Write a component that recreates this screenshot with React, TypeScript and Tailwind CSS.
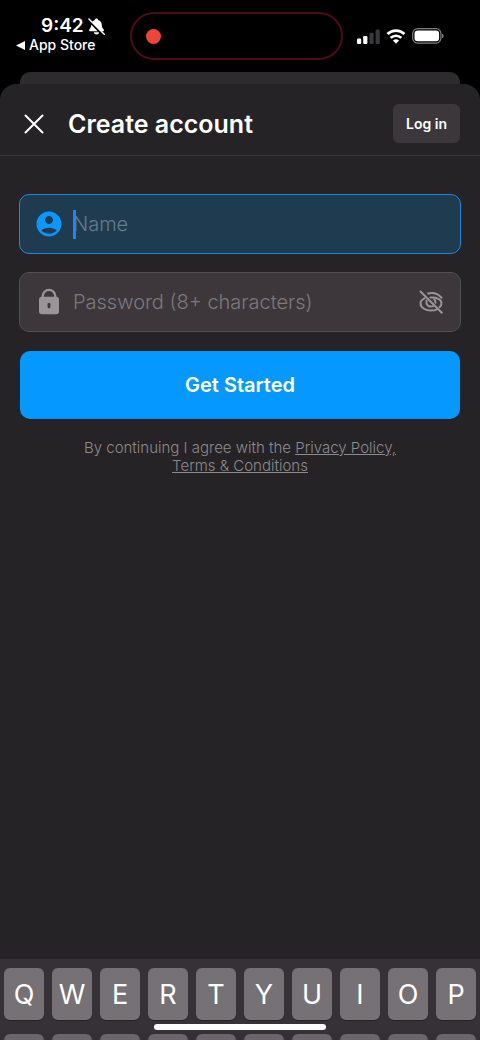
import React from "react";

const TOP_ROW = ["Q", "W", "E", "R", "T", "Y", "U", "I", "O", "P"];

function BellOffIcon() {
  return (
    <svg className="h-[17px] w-[17px]" viewBox="0 0 18 18" aria-hidden="true">
      <path d="M9 .6c.9 0 1.600.6 1.700 1.400 2.500.7 3.800 2.600 3.900 5.200.1 2.500.7 3.400 1.700 4.400.4.5.6.9.6 1.300 0 .6-.4 1.100-1.200 1.100H2.300c-.8 0-1.200-.5-1.200-1.100 0-.4.2-.8.6-1.300 1-1 1.600-1.900 1.700-4.400.1-2.600 1.400-4.500 3.900-5.200C7.400 1.200 8.100.6 9 .6z" fill="#fff" />
      <path d="M6.200 15h5.600c-.2 1.500-1.300 2.400-2.800 2.400S6.400 16.500 6.200 15z" fill="#fff" />
      <path d="M0 2.200 16.200 18.400" stroke="#000" strokeWidth="2.200" />
      <path d="M1 1 17.200 17.200" stroke="#fff" strokeWidth="1.500" strokeLinecap="round" />
    </svg>
  );
}

function SignalIcon() {
  return (
    <svg className="h-[15px] w-[23px]" viewBox="0 0 23 15" aria-hidden="true">
      <rect x="0" y="9.500" width="4.200" height="5.500" rx="1.200" fill="#fff" />
      <rect x="6.200" y="7" width="4.200" height="8" rx="1.200" fill="#fff" />
      <rect x="12.400" y="3.700" width="4.200" height="11.300" rx="1.200" fill="#38373a" />
      <rect x="18.600" y="0.500" width="4.200" height="14.500" rx="1.200" fill="#38373a" />
    </svg>
  );
}

function WifiIcon() {
  return (
    <svg className="h-[15px] w-5" viewBox="0 0 20 15" fill="none" stroke="#fff" strokeWidth="2.700" aria-hidden="true">
      <path d="M1.500 5.100a12.300 12.300 0 0 1 17 0" />
      <path d="M4.700 8.900a7.600 7.600 0 0 1 10.600 0" />
      <path d="M10 14.800 6.900 11.600a4.600 4.600 0 0 1 6.200 0z" fill="#fff" stroke="none" />
    </svg>
  );
}

function BatteryIcon() {
  return (
    <svg className="h-4 w-8" viewBox="0 0 32 16" aria-hidden="true">
      <rect x="0.700" y="0.700" width="28.200" height="14.400" rx="4.800" fill="none" stroke="#807f82" strokeWidth="1.200" />
      <rect x="2.500" y="2.500" width="24.600" height="10.800" rx="3.200" fill="#fff" />
      <path d="M30 5.500c1 .4 1.600 1.300 1.600 2.400S31 9.900 30 10.300z" fill="#807f82" />
    </svg>
  );
}

function PersonIcon() {
  return (
    <svg className="h-[30px] w-[30px]" viewBox="0 0 24 24" fill="#0a98ff" aria-hidden="true">
      <path d="M12 2C6.480 2 2 6.480 2 12s4.480 10 10 10 10-4.480 10-10S17.520 2 12 2zm0 3.600c1.770 0 3.200 1.430 3.200 3.200s-1.430 3.200-3.200 3.200-3.200-1.430-3.200-3.200 1.430-3.200 3.200-3.200zm0 14.100c-2.400 0-4.700-.9-6.200-2.500C7.400 15.700 9.600 15 12 15s4.600.7 6.200 2.200c-1.500 1.600-3.800 2.500-6.200 2.500z" />
    </svg>
  );
}

function LockIcon() {
  return (
    <svg className="h-[30px] w-[30px]" viewBox="0 0 30 30" aria-hidden="true">
      <path d="M8.700 12V9.200a6.300 6.300 0 0 1 12.600 0V12" fill="none" stroke="#989498" strokeWidth="2.400" />
      <rect x="5" y="9.800" width="20" height="17.500" rx="3" fill="#989498" />
      <rect x="13.600" y="16" width="2.800" height="5.200" rx="1.200" fill="#3d373b" />
    </svg>
  );
}

function EyeOffIcon() {
  return (
    <svg className="h-6 w-6" viewBox="0 0 24 24" fill="none" stroke="#989498" strokeWidth="2" strokeLinecap="round" aria-hidden="true">
      <path d="M9 3.400C14 2.400 19.500 4 22.600 7.800" />
      <path d="M5.500 8.300C3 9.500 1.500 11.300 1.500 13.200c0 4.300 5 7.400 10.500 7.400 2.200 0 4.300-.5 6-1.300" />
      <path d="M11.500 7.500c6-.4 11 1.900 11 5.700 0 1.500-.7 2.900-2 4" />
      <path d="M7.600 10.600c-.9 3.200 1 6 4.400 6 .9 0 1.700-.2 2.400-.6" />
      <path d="M15.200 9.200c.9.900 1.400 2.100 1.300 3.500" />
      <path d="M1.500 1.500 22.800 22.800" />
    </svg>
  );
}

function StatusBar() {
  return (
    <div className="grid h-[72px] grid-cols-[130fr_213fr_137fr] pt-3">
      <div className="flex flex-col pl-4">
        <div className="flex h-7 items-center gap-1 pl-[25px] text-[19px] font-semibold leading-7">
          <span>9:42</span>
          <BellOffIcon />
        </div>
        <a href="#" className="-mt-1 flex items-center gap-1 whitespace-nowrap text-sm font-medium leading-[18px]">
          <svg className="h-[9px] w-[9px]" viewBox="0 0 9 9" fill="#fff" aria-hidden="true">
            <path d="M0 4.500 9 0v9z" />
          </svg>
          App Store
        </a>
      </div>
      <div className="flex h-12 items-center rounded-full border-2 border-[#4d0c12] pl-[14px]">
        <span className="h-[15px] w-[15px] rounded-full bg-[#ed4639]" />
      </div>
      <div className="flex h-12 items-center gap-[6px] pl-[14px]">
        <SignalIcon />
        <WifiIcon />
        <BatteryIcon />
      </div>
    </div>
  );
}

function Keyboard() {
  return (
    <div className="relative flex flex-col gap-[14px] bg-[#363136] px-1 pt-[9px]">
      <div className="grid grid-cols-10 gap-2">
        {TOP_ROW.map((key) => (
          <button
            key={key}
            type="button"
            className="h-[52px] rounded-md bg-[#757175] text-[27px] leading-none font-normal shadow-[0_1px_0_#242125]"
          >
            {key}
          </button>
        ))}
      </div>
      <div className="grid grid-cols-10 gap-2" aria-hidden="true">
        {TOP_ROW.map((key) => (
          <span key={key} className="h-[6px] rounded-t-md bg-[#696569]" />
        ))}
      </div>
      <div className="absolute bottom-[10px] left-1/2 h-[6px] w-[172px] -translate-x-1/2 rounded-full bg-white" />
    </div>
  );
}

export default function App() {
  return (
    <div className="flex min-h-screen flex-col bg-black font-['Inter','Liberation_Sans',sans-serif] text-white">
      <StatusBar />
      <div className="mx-5 h-3 rounded-t-[10px] bg-[#2d2b2e]" />
      <main className="flex flex-1 flex-col rounded-t-2xl bg-[#252326]">
        <header className="flex h-[72px] items-center border-b border-[#39363a] px-5 pt-2">
          <button type="button" aria-label="Close" className="flex h-7 w-7 items-center justify-center">
            <svg className="h-5 w-5" viewBox="0 0 20 20" stroke="#fff" strokeWidth="2" strokeLinecap="round" aria-hidden="true">
              <path d="M1.500 1.500 18.500 18.500M18.500 1.500 1.500 18.500" />
            </svg>
          </button>
          <h1 className="ml-5 flex-1 text-[25px] leading-8 font-semibold">Create account</h1>
          <button type="button" className="h-[39px] rounded-md bg-[#3b373b] px-[13px] text-sm font-semibold">
            Log in
          </button>
        </header>

        <form className="flex flex-col px-[19px] pt-[38px]" onSubmit={(e) => e.preventDefault()}>
          <label className="flex h-[60px] items-center rounded-[10px] border border-[#2189dc] bg-[#1f3b50] pl-[14px]">
            <PersonIcon />
            <span className="relative ml-[9px] flex flex-1">
              <input
                type="text"
                aria-label="Name"
                placeholder="Name"
                className="h-[29px] w-full bg-transparent text-xl font-light outline-none placeholder:text-[#647b8c]"
              />
              <span className="absolute top-0 left-0 h-[29px] w-[3px] bg-[#1f86f5]" />
            </span>
          </label>
          <div className="mt-[18px] flex h-[60px] items-center rounded-[10px] border border-[#534f53] bg-[#3d373b] pr-[17px] pl-[14px]">
            <LockIcon />
            <input
              type="password"
              aria-label="Password"
              placeholder="Password (8+ characters)"
              className="ml-[9px] h-[29px] min-w-0 flex-1 bg-transparent text-xl font-light outline-none placeholder:text-[#7c777c]"
            />
            <button type="button" aria-label="Show password">
              <EyeOffIcon />
            </button>
          </div>
          <button type="submit" className="mx-px mt-[19px] h-[68px] rounded-[10px] bg-[#0598ff] text-xl font-semibold">
            Get Started
          </button>
        </form>

        <p className="mt-5 px-20 text-center text-[15px] leading-[18px] font-light text-[#8d8a8e]">
          By continuing I agree with the{" "}
          <a href="#" className="underline">
            Privacy Policy,
          </a>{" "}
          <a href="#" className="underline">
            Terms &amp; Conditions
          </a>
        </p>
      </main>
      <Keyboard />
    </div>
  );
}
